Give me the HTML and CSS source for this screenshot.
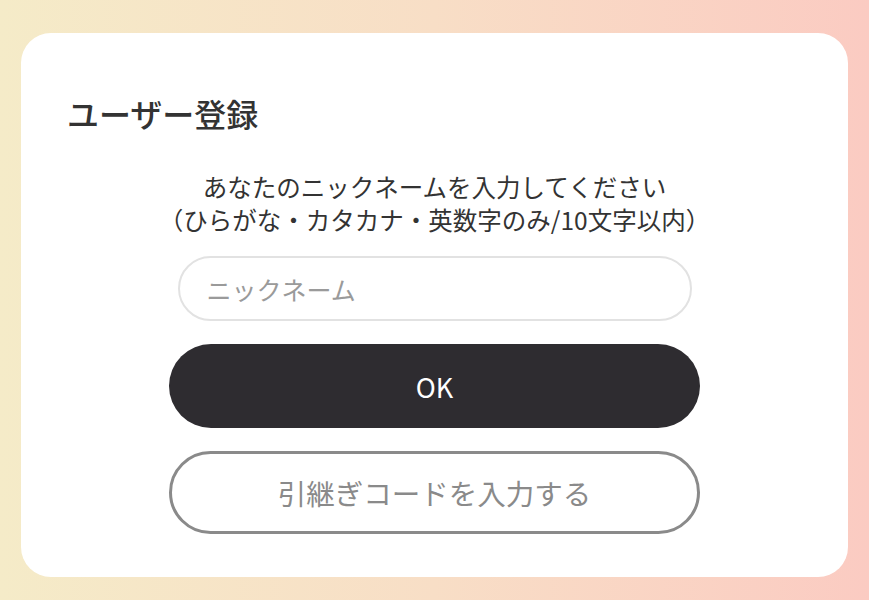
FILE: index.html
```html
<!DOCTYPE html>
<html lang="ja">
<head>
<meta charset="UTF-8">
<title>ユーザー登録</title>
<link rel="stylesheet" href="styles.css">
</head>
<body>
    <div class="card">
        <h1 class="title">ユーザー登録</h1>
        <form class="register">
            <p class="lead">あなたのニックネームを入力してください<br>（ひらがな・カタカナ・英数字のみ/10文字以内）</p>
            <input type="text" class="nickname" placeholder="ニックネーム" maxlength="10">
            <button type="button" class="btn btn-ok">OK</button>
            <button type="button" class="btn btn-code">引継ぎコードを入力する</button>
        </form>
    </div>
</body>
</html>
```

FILE: styles.css
```css
* {
    box-sizing: border-box;
}
body {
    margin: 0;
    height: 600px;
    padding: 33px 21px 23px;
    font-family: "Noto Sans CJK JP", "Noto Sans", sans-serif;
    color: #333;
    background: linear-gradient(to right, #f5ebc8 0%, #f8dec6 50%, #fbcbc2 100%);
}
.card {
    background-color: white;
    border-radius: 30px;
    padding: 58px 46px 44px;
    height: 544px;
}
.title {
    margin: 0;
    font-size: 32px;
    line-height: 44px;
    font-weight: 500;
    color: #333;
}
.register {
    display: flex;
    flex-direction: column;
    align-items: center;
    margin-top: 35px;
}
.lead {
    margin: 0;
    text-align: center;
    font-size: 24.5px;
    line-height: 33px;
    color: #333;
}
.nickname {
    width: 514px;
    height: 65px;
    margin-top: 20px;
    padding: 0 27px;
    border: 2px solid #e2e2e2;
    border-radius: 33px;
    font-family: inherit;
    font-size: 25px;
    color: #333;
    outline: none;
}
.nickname::placeholder {
    color: #9a9a9a;
}
.btn {
    width: 531px;
    margin-top: 23px;
    border-radius: 42px;
    font-family: inherit;
    cursor: pointer;
}
.btn-ok {
    height: 84px;
    border: none;
    background-color: #2e2c30;
    color: white;
    font-size: 27px;
}
.btn-code {
    height: 83px;
    border: 3px solid #8a8a8a;
    background-color: white;
    color: #8a8a8a;
    font-size: 28.5px;
}
```
